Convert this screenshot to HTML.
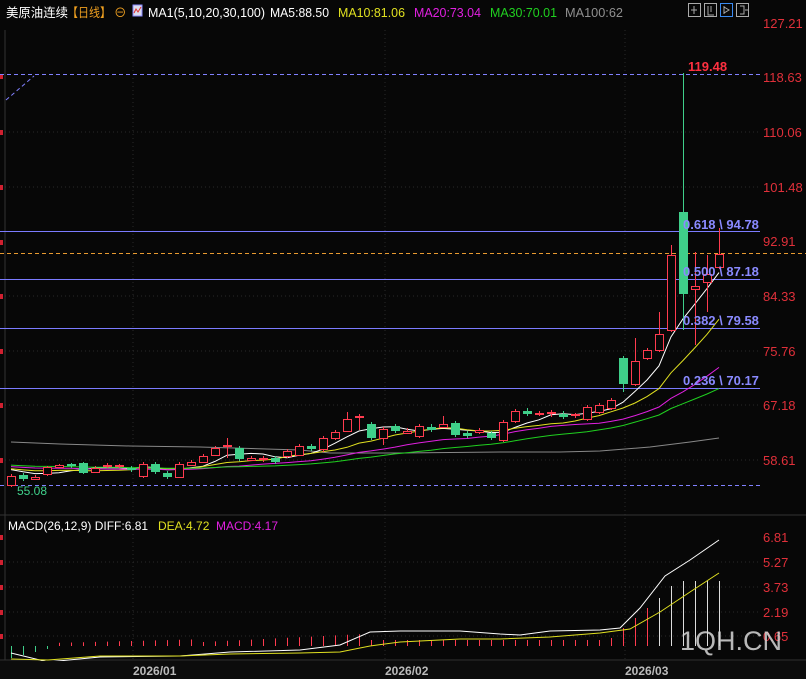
<!DOCTYPE html>
<html><head><meta charset="utf-8"><style>
html,body{margin:0;padding:0;background:#070707;width:806px;height:679px;overflow:hidden}
svg{display:block}
text{font-family:"Liberation Sans","Noto Sans CJK SC",sans-serif}
</style></head><body>
<svg id="s" width="806" height="679" xmlns="http://www.w3.org/2000/svg">
<rect width="806" height="679" fill="#070707"/>
<g stroke="#2a2a2a" stroke-dasharray="1,3">
<line x1="5" y1="132" x2="760" y2="132"/><line x1="5" y1="187" x2="760" y2="187"/>
<line x1="5" y1="296" x2="760" y2="296"/><line x1="5" y1="351" x2="760" y2="351"/>
<line x1="5" y1="405" x2="760" y2="405"/><line x1="5" y1="460" x2="760" y2="460"/>
<line x1="5" y1="562" x2="760" y2="562"/><line x1="5" y1="587" x2="760" y2="587"/>
<line x1="5" y1="612" x2="760" y2="612"/><line x1="5" y1="636" x2="760" y2="636"/>
<line x1="133" y1="30" x2="133" y2="660"/><line x1="385" y1="30" x2="385" y2="660"/><line x1="625" y1="30" x2="625" y2="660"/>
</g>
<line x1="0" y1="515" x2="806" y2="515" stroke="#333"/>
<line x1="0" y1="660" x2="806" y2="660" stroke="#333"/>
<line x1="5" y1="30" x2="5" y2="660" stroke="#333"/>
<g fill="#d02030"><rect x="0" y="74" width="3" height="5"/><rect x="0" y="130" width="3" height="5"/><rect x="0" y="185" width="3" height="5"/><rect x="0" y="240" width="3" height="5"/><rect x="0" y="294" width="3" height="5"/><rect x="0" y="349" width="3" height="5"/><rect x="0" y="403" width="3" height="5"/><rect x="0" y="458" width="3" height="5"/><rect x="0" y="535" width="3" height="5"/><rect x="0" y="560" width="3" height="5"/><rect x="0" y="585" width="3" height="5"/><rect x="0" y="610" width="3" height="5"/><rect x="0" y="634" width="3" height="5"/></g>
<g stroke="#7b7bff" stroke-width="1">
<line x1="0" y1="231.5" x2="760" y2="231.5"/><line x1="0" y1="279.5" x2="760" y2="279.5"/>
<line x1="0" y1="328.5" x2="760" y2="328.5"/><line x1="0" y1="388.5" x2="760" y2="388.5"/>
</g>
<line x1="0" y1="253.5" x2="806" y2="253.5" stroke="#e89a30" stroke-dasharray="4,3"/>
<line x1="0" y1="74.5" x2="760" y2="74.5" stroke="#8080ff" stroke-dasharray="4,3"/>
<line x1="0" y1="485.5" x2="760" y2="485.5" stroke="#8080ff" stroke-dasharray="4,3"/>
<line x1="6" y1="100" x2="34" y2="76" stroke="#8080ff" stroke-dasharray="4,3"/>
<polyline points="11,442 60,444 130,446 200,447 300,450 330,453 400,453 500,452 560,452 600,451 650,447 690,442 719,438" fill="none" stroke="#888" stroke-width="1"/>
<g id="ma"></g>
<g id="cd"></g>
<g fill="#8a8aff" font-size="13" font-weight="bold">
<text x="683" y="229">0.618 \ 94.78</text>
<text x="683" y="276">0.500 \ 87.18</text>
<text x="683" y="325">0.382 \ 79.58</text>
<text x="683" y="385">0.236 \ 70.17</text>
</g>
<text x="688" y="71" fill="#ff3040" font-size="13" font-weight="bold">119.48</text>
<text x="17" y="495" fill="#3fcf8a" font-size="12">55.08</text>
<g fill="#e0303a" font-size="13">
<text x="763" y="28">127.21</text><text x="763" y="82">118.63</text>
<text x="763" y="137">110.06</text><text x="763" y="192">101.48</text>
<text x="763" y="246">92.91</text><text x="763" y="301">84.33</text>
<text x="763" y="356">75.76</text><text x="763" y="410">67.18</text>
<text x="763" y="465">58.61</text>
<text x="763" y="542">6.81</text><text x="763" y="567">5.27</text>
<text x="763" y="592">3.73</text><text x="763" y="617">2.19</text><text x="763" y="641">0.65</text>
</g>
<g font-size="12.5">
<text x="6" y="17" fill="#ffffff" textLength="62" lengthAdjust="spacingAndGlyphs">美原油连续</text>
<text x="67" y="17" fill="#f0a020" textLength="44" lengthAdjust="spacingAndGlyphs">【日线】</text>
<text x="114" y="17" fill="#f0a020">⊖</text>
<rect x="133" y="5" width="9" height="11" fill="#dde" stroke="#88f"/>
<polyline points="134,13 136,9 138,12 141,7" fill="none" stroke="#e03030"/>
<text x="148" y="17" fill="#ffffff" textLength="117" lengthAdjust="spacingAndGlyphs">MA1(5,10,20,30,100)</text>
<text x="270" y="17" fill="#ffffff" textLength="59" lengthAdjust="spacingAndGlyphs">MA5:88.50</text>
<text x="338" y="17" fill="#e0e020" textLength="67" lengthAdjust="spacingAndGlyphs">MA10:81.06</text>
<text x="414" y="17" fill="#e020e0" textLength="67" lengthAdjust="spacingAndGlyphs">MA20:73.04</text>
<text x="490" y="17" fill="#20d020" textLength="67" lengthAdjust="spacingAndGlyphs">MA30:70.01</text>
<text x="565" y="17" fill="#909090" textLength="58" lengthAdjust="spacingAndGlyphs">MA100:62</text>
</g>
<g fill="none" stroke="#aaa">
<rect x="688.5" y="3.5" width="12" height="13"/><rect x="704.5" y="3.5" width="12" height="13"/>
<rect x="720.5" y="3.5" width="12" height="13" stroke="#3a8af0"/><rect x="736.5" y="3.5" width="12" height="13"/>
<path d="M694 6v8M691 10h6M708 6v9h6M711 6v6M724 6v8M724 7l5 3l-5 3M740 6h4v8h-4M745 10h3"/>
</g>
<text x="8" y="530" font-size="12" fill="#ffffff">MACD(26,12,9) DIFF:6.81</text>
<text x="158" y="530" font-size="12" fill="#e0e020">DEA:4.72</text>
<text x="216" y="530" font-size="12" fill="#e020e0">MACD:4.17</text>
<g id="mb"></g>
<polyline points="11,653 48,662 100,657 180,656 230,652 300,650 340,645 370,632 400,631 460,631 500,634 520,635 550,631 600,630 620,628 640,608 665,576 690,560 719,540" fill="none" stroke="#fff"/>
<polyline points="11,659 48,660 100,656 180,656 230,654 300,653 340,652 370,646 400,642 460,639 500,639 550,637 600,633 630,629 660,612 690,592 719,573" fill="none" stroke="#e0e020"/>
<rect x="0" y="661" width="806" height="18" fill="#0c0c0c"/>
<g fill="#bbb" font-size="12" font-weight="bold">
<text x="133" y="675">2026/01</text><text x="385" y="675">2026/02</text><text x="625" y="675">2026/03</text>
</g>
<text x="680" y="650" fill="#d8d8d8" font-size="27" opacity="0.85">1QH.CN</text>
</svg>
<script>
var C=[[485,476,474,487],[475,479,473,481],[479,477,475,480],[474,467,466,476],[467,465,464,468],[464,466,463,468],[463,473,462,474],[472,468,466,473],[466,466,463,468],[466,466,464,468],[468,470,466,472],[476,464,462,478],[464,472,462,474],[473,477,471,479],[477,464,462,478],[465,462,460,466],[462,456,454,463],[455,448,446,456],[446,446,438,458],[448,459,446,461],[460,458,456,461],[460,459,456,462],[458,462,456,464],[456,451,449,458],[455,446,444,456],[446,449,444,451],[449,438,436,452],[438,432,430,440],[431,419,412,432],[418,417,414,430],[424,438,422,440],[438,429,427,445],[426,431,424,433],[433,431,428,434],[436,426,424,438],[427,430,424,432],[427,424,416,428],[423,435,421,437],[433,436,431,438],[432,430,428,434],[433,438,431,440],[440,422,420,442],[421,411,409,423],[411,414,408,416],[414,414,411,416],[413,413,410,417],[414,417,411,419],[415,415,413,418],[419,407,405,421],[412,405,403,414],[408,400,398,410],[358,384,356,392],[384,361,338,386],[358,350,348,360],[350,334,312,352],[330,255,245,332],[212,294,73,330],[289,286,252,345],[282,274,255,312],[267,254,228,269]];
var ns="http://www.w3.org/2000/svg",cd=document.getElementById('cd'),ma=document.getElementById('ma'),mb=document.getElementById('mb');
function el(t,a,p){var e=document.createElementNS(ns,t);for(var k in a)e.setAttribute(k,a[k]);p.appendChild(e);}
var closes=[];for(var i=0;i<30;i++)closes.push(i<10?462:(i<20?464:468));
C.forEach(function(c,i){var x=11+12*i;closes.push(c[1]);
var up=c[1]<=c[0];var col=up?'#ff3b4f':'#3fcf8a';var t=Math.min(c[0],c[1]),b=Math.max(c[0],c[1]);
el('line',{x1:x+.5,y1:c[2],x2:x+.5,y2:c[3],stroke:col},cd);
if(up){if(b-t<2)el('rect',{x:x-4,y:t-1,width:9,height:2,fill:col},cd);else el('rect',{x:x-3.5,y:t+.5,width:8,height:b-t,fill:'#070707',stroke:col},cd);}
else el('rect',{x:x-4,y:t,width:9,height:Math.max(b-t,2),fill:col},cd);});
[[5,'#ffffff'],[10,'#e0e020'],[20,'#e020e0'],[30,'#20d020']].forEach(function(m){var pts=[];
for(var i=0;i<C.length;i++){var s=0;for(var j=0;j<m[0];j++)s+=closes[30+i-j];pts.push((11+12*i)+','+(s/m[0]).toFixed(1));}
el('polyline',{points:pts.join(' '),fill:'none',stroke:m[1]},ma);});
for(var i=0;i<C.length;i++){var x=11+12*i;var h;
if(i<4){el('line',{x1:x+.5,y1:646,x2:x+.5,y2:646+ (4-i)*3,stroke:'#3fcf8a'},mb);continue;}
h=i<16?2+i*0.3:(i<30?4+(i-16)*0.6:(i<50?6:8+(i-50)*10));if(i>=55)h=65;if(i==55)h=60;
el('line',{x1:x+.5,y1:646,x2:x+.5,y2:646-h,stroke:i>=54?'#ddd':'#ff3b4f'},mb);}
</script>
</body></html>
